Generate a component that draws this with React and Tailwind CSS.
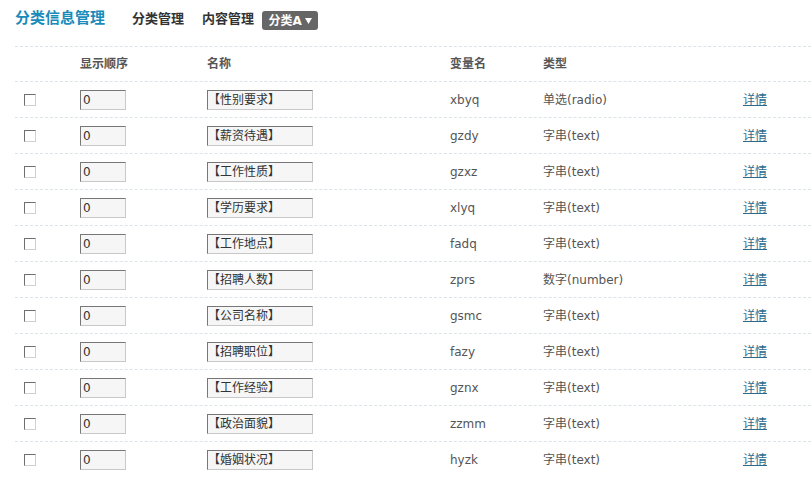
import React from "react";

const rows = [
  ["【性别要求】", "xbyq", "单选(radio)"],
  ["【薪资待遇】", "gzdy", "字串(text)"],
  ["【工作性质】", "gzxz", "字串(text)"],
  ["【学历要求】", "xlyq", "字串(text)"],
  ["【工作地点】", "fadq", "字串(text)"],
  ["【招聘人数】", "zprs", "数字(number)"],
  ["【公司名称】", "gsmc", "字串(text)"],
  ["【招聘职位】", "fazy", "字串(text)"],
  ["【工作经验】", "gznx", "字串(text)"],
  ["【政治面貌】", "zzmm", "字串(text)"],
  ["【婚姻状况】", "hyzk", "字串(text)"],
];

const font = { fontFamily: '"DejaVu Sans", "Noto Sans CJK SC", sans-serif' };

export default function App() {
  return (
    <div className="w-[811px] h-[477px] overflow-hidden bg-white pl-[15px] text-[12px] text-[#555]" style={font}>
      <div className="h-[46px] flex items-start pt-[8px]">
        <div className="text-[15px] font-bold text-[#1a8cba] leading-[20px] w-[117px]">分类信息管理</div>
        <div className="text-[13px] font-bold text-[#333] leading-[20px] mt-[1px]">分类管理</div>
        <div className="text-[13px] font-bold text-[#333] leading-[20px] mt-[1px] ml-[18px]">内容管理</div>
        <div className="ml-[8px] mt-[3px] h-[19px] w-[56px] rounded-[3px] bg-[#666] text-white font-bold text-[12px] flex items-center justify-center gap-[3px] leading-none">
          <span>分类A</span>
          <svg width="7" height="6" viewBox="0 0 7 6"><path d="M0 0H7L3.5 6Z" fill="#fff" /></svg>
        </div>
      </div>
      <div className="border-t border-dashed border-[#dbe4e8]">
        <div className="grid grid-cols-[65px_127px_243px_93px_200px_1fr] h-[35px] items-center border-b border-dashed border-[#dbe4e8] font-bold text-[#555]">
          <div></div>
          <div>显示顺序</div>
          <div>名称</div>
          <div>变量名</div>
          <div>类型</div>
          <div></div>
        </div>
        {rows.map(([name, v, t], i) => (
          <div
            key={i}
            className="grid grid-cols-[65px_127px_243px_93px_200px_1fr] h-[36px] items-center border-b border-dashed border-[#dbe4e8]"
          >
            <div className="pl-[9px]">
              <div className="w-[12px] h-[12px] bg-white border border-t-[#6f6f6f] border-l-[#6f6f6f] border-r-[#d0d0d0] border-b-[#d0d0d0]"></div>
            </div>
            <div>
              <div className="w-[46px] h-[20px] bg-[#f6f6f6] border border-t-[#777] border-l-[#777] border-r-[#c8c8c8] border-b-[#c8c8c8] pl-[2px] leading-[18px] text-[#333]">0</div>
            </div>
            <div>
              <div className="w-[106px] h-[20px] bg-[#f6f6f6] border border-t-[#777] border-l-[#777] border-r-[#c8c8c8] border-b-[#c8c8c8] leading-[18px] text-[#333]">{name}</div>
            </div>
            <div>{v}</div>
            <div>{t}</div>
            <div>
              <span className="underline text-[#2c6a8c]">详情</span>
            </div>
          </div>
        ))}
      </div>
    </div>
  );
}
